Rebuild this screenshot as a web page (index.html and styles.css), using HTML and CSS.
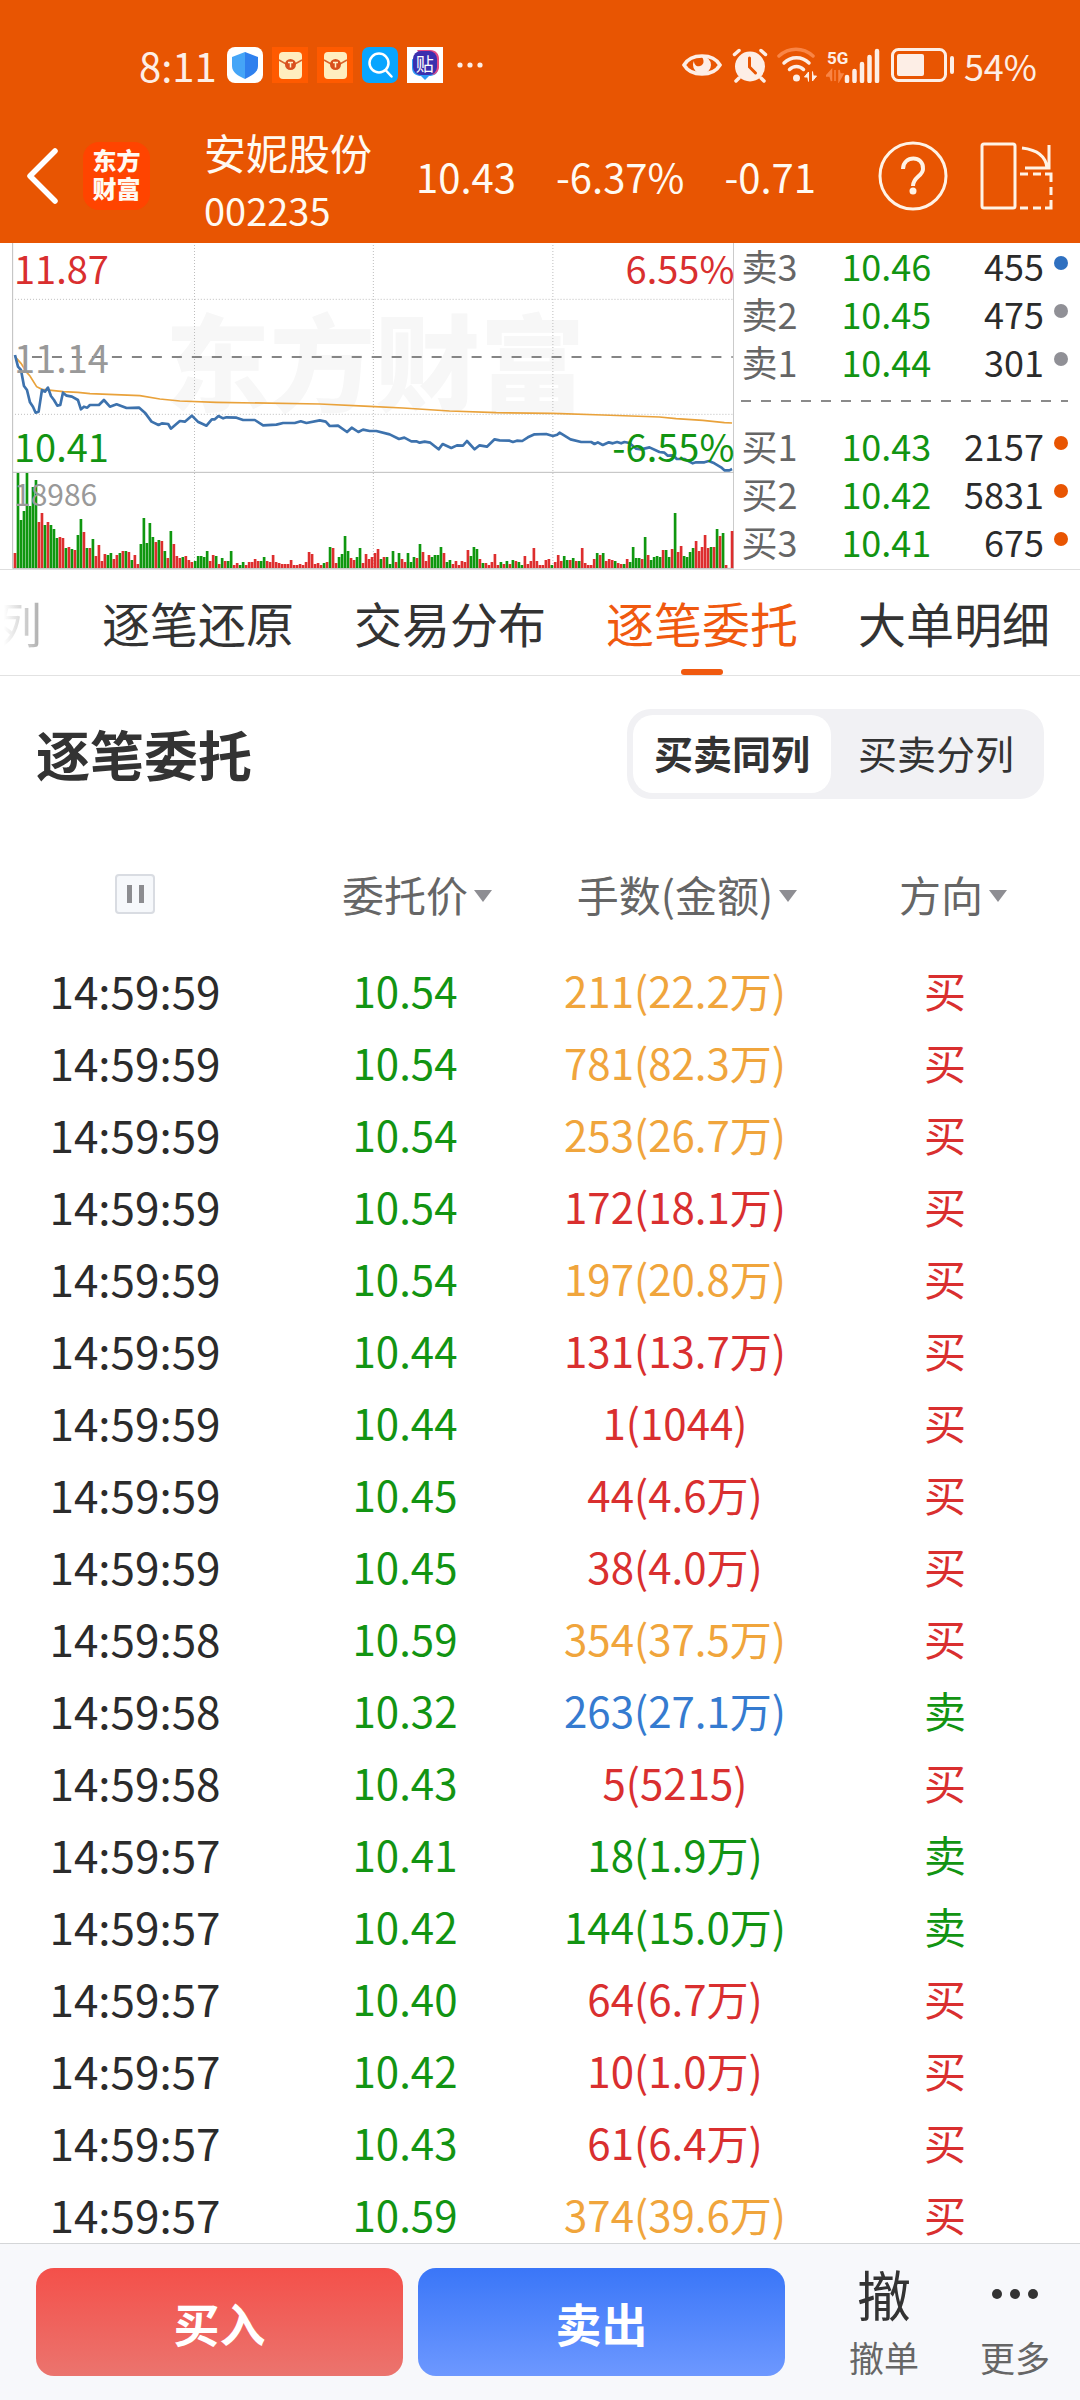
FILE: index.html
```html
<!DOCTYPE html>
<html lang="zh-CN">
<head>
<meta charset="utf-8">
<meta name="viewport" content="width=device-width, initial-scale=1">
<title>安妮股份 002235</title>
<link rel="stylesheet" href="styles.css">
</head>
<body>
<div class="app">
  <div class="status">
    <span class="status-text">8:11</span>
    <div class="status-apps">
      <svg width="36" height="36" viewBox="0 0 36 36"><rect width="36" height="36" rx="8" fill="#fff"/><path d="M18 5 31 10v9c0 6-6 10-13 13z" fill="#2f80ee"/><path d="M18 5 5 10v9c0 6 6 10 13 13z" fill="#45a5f7"/></svg>
      <svg width="36" height="36" viewBox="0 0 36 36"><rect width="36" height="36" fill="#ff5a00"/><rect x="7" y="5" width="23" height="27" rx="4" fill="#ffeebf"/><path d="M7 13 14 17h9l7-4" fill="none" stroke="#d9622a" stroke-width="1.5"/><circle cx="18.500" cy="17.500" r="5.500" fill="#d9501e"/><path d="M16 15.500h5M18.500 15.500v5" stroke="#fff0c8" stroke-width="1.500"/></svg>
      <svg width="36" height="36" viewBox="0 0 36 36"><rect width="36" height="36" fill="#ff5a00"/><rect x="7" y="5" width="23" height="27" rx="4" fill="#ffeebf"/><path d="M7 13 14 17h9l7-4" fill="none" stroke="#d9622a" stroke-width="1.5"/><circle cx="18.500" cy="17.500" r="5.500" fill="#d9501e"/><path d="M16 15.500h5M18.500 15.500v5" stroke="#fff0c8" stroke-width="1.500"/></svg>
      <svg width="36" height="36" viewBox="0 0 36 36"><rect width="36" height="36" rx="7" fill="#08a5ff"/><circle cx="17" cy="16" r="9.500" fill="none" stroke="#fff" stroke-width="2.500"/><path d="m23.500 23 6 6.500" stroke="#fff" stroke-width="2.500" stroke-linecap="round"/></svg>
      <span class="tieba"><svg width="36" height="36" viewBox="0 0 36 36"><rect width="36" height="36" fill="#fff"/><path d="M5 12v9c0 6 5 8 9 8l4 4 4-4c5 0 9-2 9-8z" fill="#2f9bf5"/><path d="M10 3h13c6 0 9 4 9 9v8c0 4-3 7-6 8z" fill="#e34a86"/><rect x="6" y="4" width="24" height="24" rx="8" fill="#3b2fae"/></svg><span class="tieba-char">贴</span></span>
      <svg class="more-dots" width="28" height="36" viewBox="0 0 28 36" fill="#fdeee6"><circle cx="4" cy="18" r="2.600"/><circle cx="14" cy="18" r="2.600"/><circle cx="24" cy="18" r="2.600"/></svg>
    </div>
    <div class="status-right">
      <svg width="42" height="36" viewBox="0 0 42 36"><path d="M3 18C10 6 32 6 39 18 32 30 10 30 3 18z" fill="none" stroke="#fdeee6" stroke-width="3.500"/><path d="M21 9a9 9 0 1 1-9 9c0-2 .5-3 1-4 0 4 3 6 6 5 4-1 5-6 1-10z" fill="#fdeee6"/></svg>
      <svg width="36" height="36" viewBox="0 0 36 36" fill="none" stroke="#fdeee6" stroke-width="3.500" stroke-linecap="round"><circle cx="18" cy="19.500" r="15" fill="#fdeee6" stroke="none"/><path d="M2.500 7.500 7 3.500M33.500 7.500 29 3.500M7 31l-3 3M29 31l3 3"/><path d="M17.500 11v9l6 6" stroke="#e85502" stroke-width="3"/></svg>
      <svg width="40" height="36" viewBox="0 0 40 36" fill="none" stroke="#fdeee6" stroke-width="3.500" stroke-linecap="round"><path d="M2 9c10-9 24-9 34 0" stroke="#f98546"/><path d="M7 16c7-7 18-7 25 0M12.500 22.500c4-4 10-4 14 0"/><circle cx="19.500" cy="31" r="3.500" fill="#fdeee6" stroke="none"/><path d="M31.500 34V25l-4 5h3zM35.500 25v9l4-5h-3z" fill="#fdeee6" stroke="#fdeee6" stroke-width="1"/></svg>
      <svg width="56" height="36" viewBox="0 0 56 36"><text x="1" y="17" class="net">5G</text><path d="M5.500 34V23L0 29h4zM9 23v11M13 23v11l4-7h-3z" fill="#f98546" stroke="#f98546" stroke-width="1.500"/><path d="M21 30v4M28.500 24v10M36 17v17M43.500 10v24M51 4v30" stroke="#fdeee6" stroke-width="4.500" stroke-linecap="round"/></svg>
      <svg width="64" height="36" viewBox="0 0 64 36"><rect x="1.500" y="2.500" width="53" height="31" rx="6" fill="none" stroke="#fdeee6" stroke-width="3"/><rect x="6" y="7" width="27" height="22" rx="2" fill="#fdeee6"/><path d="M61 11v14" stroke="#fdeee6" stroke-width="4" stroke-linecap="round"/></svg>
    </div>
    <span class="status-text battery">54%</span>
  </div>

  <header class="head">
    <button class="icon-btn" aria-label="返回"><svg width="32" height="56" viewBox="0 0 32 56"><path d="M29 3 4 28l25 25" fill="none" stroke="#fff" stroke-width="5.500" stroke-linecap="round" stroke-linejoin="round"/></svg></button>
    <span class="logo">东方<br>财富</span>
    <div class="stock"><h1 class="stock-name">安妮股份</h1><span class="stock-code">002235</span></div>
    <div class="quote"><span>10.43</span><span>-6.37%</span><span>-0.71</span></div>
    <div class="head-tools">
      <button class="icon-btn" aria-label="帮助"><svg width="70" height="70" viewBox="0 0 70 70" fill="none" stroke="#fff3e6" stroke-width="3"><circle cx="35" cy="35" r="33"/><path d="M25 28c0-14 21-14 20 0 0 7-10 8-10 17" stroke-width="4"/><circle cx="35" cy="50" r="3.500" fill="#fff3e6" stroke="none"/></svg></button>
      <button class="icon-btn" aria-label="横屏"><svg width="74" height="70" viewBox="0 0 74 70" fill="none" stroke="#fff3e6" stroke-width="3"><rect x="2" y="3" width="33" height="64" rx="2"/><path d="M42 7c17 2 24 9 25 20M45 27h24V4"/><path d="M40 33h8M53 33h8M65 33h6v8M71 46v8M71 59v8h-6M61 67h-8M48 67h-8"/></svg></button>
    </div>
  </header>

  <section class="market">
    <div class="chart">
      <span class="watermark">东方财富</span>
      <svg class="chart-svg" viewBox="0 9 2205 978" preserveAspectRatio="none">
        <g fill="none" stroke="#bdbdbd" stroke-width="3">
          <path d="M38 9V985M2203 9V985M38 697H2203M38 985H2203"/>
          <path stroke-dasharray="3 6" d="M45 178H2200M45 523H2200M584 15V985M1121 15V985M1660 15V985"/>
        </g>
        <path d="M96 351H2200" stroke="#858585" stroke-width="6" stroke-dasharray="30 30"/>
        <g id="volume"></g>
        <polyline fill="none" stroke="#e9a23b" stroke-width="5" points="45,350 63,370 81,398 90,408 110,440 126,448 190,455 234,457 270,461 420,467 480,477 540,483 650,487 960,492 1110,499 1210,504 1350,513 1490,518 1660,520 1810,525 1980,531 2030,536 2110,541 2175,548 2198,549"/>
        <polyline fill="none" stroke="#3d72ad" stroke-width="8" stroke-linejoin="round" points="45,345 54,380 63,390 72,438 81,450 90,487 99,500 107,518 116,515 126,450 135,455 144,443 153,468 162,480 172,497 181,495 189,458 200,467 216,470 234,480 243,508 252,500 262,503 270,495 297,495 312,480 330,500 350,493 380,504 418,503 435,518 455,545 476,555 486,550 505,552 513,566 540,543 555,545 576,527 594,545 620,557 636,538 645,538 656,528 670,535 680,532 710,533 730,540 765,540 790,556 830,554 850,549 885,549 903,544 920,549 960,541 978,545 990,558 1015,557 1042,576 1056,563 1076,576 1090,569 1110,573 1130,573 1170,583 1198,597 1214,593 1235,604 1250,604 1260,608 1275,605 1292,608 1317,628 1329,612 1355,624 1372,616 1390,617 1402,603 1425,628 1440,616 1462,620 1485,598 1500,601 1530,602 1540,606 1552,602 1568,603 1585,592 1605,583 1640,582 1660,588 1673,584 1680,578 1690,584 1713,598 1745,606 1775,606 1785,612 1795,607 1810,615 1828,607 1840,610 1853,606 1865,610 1875,606 1890,609 1910,626 1925,628 1950,622 1980,636 1995,638 2005,647 2022,646 2032,657 2055,657 2080,670 2090,667 2115,667 2128,663 2145,670 2165,682 2175,691 2190,691 2198,687"/>
      </svg>
      <span class="tick tick-high up">11.87</span>
      <span class="tick tick-high tick-end up">6.55%</span>
      <span class="tick tick-mid">11.14</span>
      <span class="tick tick-low down">10.41</span>
      <span class="tick tick-low tick-end down">-6.55%</span>
      <span class="tick tick-vol">18986</span>
    </div>
    <div class="book">
      <div class="level"><span class="side">卖3</span><span class="down">10.46</span><span class="qty">455</span><i class="dot dot-blue"></i></div>
      <div class="level"><span class="side">卖2</span><span class="down">10.45</span><span class="qty">475</span><i class="dot"></i></div>
      <div class="level"><span class="side">卖1</span><span class="down">10.44</span><span class="qty">301</span><i class="dot"></i></div>
      <div class="book-line"></div>
      <div class="level"><span class="side">买1</span><span class="down">10.43</span><span class="qty">2157</span><i class="dot dot-orange"></i></div>
      <div class="level"><span class="side">买2</span><span class="down">10.42</span><span class="qty">5831</span><i class="dot dot-orange"></i></div>
      <div class="level"><span class="side">买3</span><span class="down">10.41</span><span class="qty">675</span><i class="dot dot-orange"></i></div>
    </div>
  </section>

  <nav class="tabs">
    <a href="#" class="tab tab-faded">列</a>
    <a href="#" class="tab">逐笔还原</a>
    <a href="#" class="tab">交易分布</a>
    <a href="#" class="tab tab-active" aria-current="page">逐笔委托</a>
    <a href="#" class="tab">大单明细</a>
  </nav>

  <main class="orders">
    <div class="orders-head">
      <h2 class="title">逐笔委托</h2>
      <div class="segment"><button class="seg seg-on">买卖同列</button><button class="seg">买卖分列</button></div>
    </div>
    <table class="list">
      <thead>
        <tr>
          <th><button class="pause" aria-label="暂停"><i></i><i></i></button></th>
          <th><button class="sort">委托价</button></th>
          <th><button class="sort">手数(金额)</button></th>
          <th class="col-side"><button class="sort">方向</button></th>
        </tr>
      </thead>
      <tbody>
        <tr><td class="time">14:59:59</td><td class="down">10.54</td><td class="big">211(22.2万)</td><td class="up">买</td></tr>
        <tr><td class="time">14:59:59</td><td class="down">10.54</td><td class="big">781(82.3万)</td><td class="up">买</td></tr>
        <tr><td class="time">14:59:59</td><td class="down">10.54</td><td class="big">253(26.7万)</td><td class="up">买</td></tr>
        <tr><td class="time">14:59:59</td><td class="down">10.54</td><td class="up">172(18.1万)</td><td class="up">买</td></tr>
        <tr><td class="time">14:59:59</td><td class="down">10.54</td><td class="big">197(20.8万)</td><td class="up">买</td></tr>
        <tr><td class="time">14:59:59</td><td class="down">10.44</td><td class="up">131(13.7万)</td><td class="up">买</td></tr>
        <tr><td class="time">14:59:59</td><td class="down">10.44</td><td class="up">1(1044)</td><td class="up">买</td></tr>
        <tr><td class="time">14:59:59</td><td class="down">10.45</td><td class="up">44(4.6万)</td><td class="up">买</td></tr>
        <tr><td class="time">14:59:59</td><td class="down">10.45</td><td class="up">38(4.0万)</td><td class="up">买</td></tr>
        <tr><td class="time">14:59:58</td><td class="down">10.59</td><td class="big">354(37.5万)</td><td class="up">买</td></tr>
        <tr><td class="time">14:59:58</td><td class="down">10.32</td><td class="big-sell">263(27.1万)</td><td class="down">卖</td></tr>
        <tr><td class="time">14:59:58</td><td class="down">10.43</td><td class="up">5(5215)</td><td class="up">买</td></tr>
        <tr><td class="time">14:59:57</td><td class="down">10.41</td><td class="down">18(1.9万)</td><td class="down">卖</td></tr>
        <tr><td class="time">14:59:57</td><td class="down">10.42</td><td class="down">144(15.0万)</td><td class="down">卖</td></tr>
        <tr><td class="time">14:59:57</td><td class="down">10.40</td><td class="up">64(6.7万)</td><td class="up">买</td></tr>
        <tr><td class="time">14:59:57</td><td class="down">10.42</td><td class="up">10(1.0万)</td><td class="up">买</td></tr>
        <tr><td class="time">14:59:57</td><td class="down">10.43</td><td class="up">61(6.4万)</td><td class="up">买</td></tr>
        <tr><td class="time">14:59:57</td><td class="down">10.59</td><td class="big">374(39.6万)</td><td class="up">买</td></tr>
      </tbody>
    </table>
  </main>

  <footer class="trade">
    <button class="trade-btn buy">买入</button>
    <button class="trade-btn sell">卖出</button>
    <div class="trade-more">
      <button class="action"><span class="action-icon">撤</span><span>撤单</span></button>
      <button class="action"><span class="action-icon"><svg width="48" height="12" viewBox="0 0 48 12" fill="#333"><circle cx="6" cy="6" r="5"/><circle cx="24" cy="6" r="5"/><circle cx="42" cy="6" r="5"/></svg></span><span>更多</span></button>
    </div>
  </footer>
</div>
<script src="chart.js"></script>
</body>
</html>
```

FILE: styles.css
```css
* { box-sizing: border-box; }
body {
  margin: 0;
  background: #fff;
  color: #2b2b2b;
  font-family: "Noto Sans CJK SC", sans-serif;
}
button { border: 0; padding: 0; margin: 0; background: none; color: inherit; font: inherit; }
h1, h2 { margin: 0; font-weight: 400; }
svg { display: block; }
.app { display: flex; flex-direction: column; height: 100vh; overflow: hidden; }
.up { color: #d92f2f; }
.down { color: #129412; }
.big { color: #f0a53c; }
.big-sell { color: #357bd0; }

/* status bar */
.status {
  display: flex;
  flex: none;
  align-items: center;
  height: 108px;
  padding: 22px 43px 0 139px;
  background: #e85502;
  color: #fdeee6;
}
.status-text { font-size: 40px; line-height: 48px; }
.status-apps { display: flex; gap: 9px; margin-left: 10px; }
.tieba { position: relative; }
.tieba-char { position: absolute; inset: 0; color: #fff; font-size: 18px; line-height: 32px; text-align: center; }
.more-dots { margin-left: 4px; }
.status-right { display: flex; gap: 9px; margin-left: auto; }
.net { font: 700 17px Roboto, sans-serif; fill: #fdeee6; }
.battery { margin-left: 9px; font-size: 36px; }

/* stock header */
.head {
  display: flex;
  flex: none;
  align-items: center;
  height: 135px;
  padding: 0 26px;
  background: #e85502;
  color: #fffaf2;
}
.logo {
  width: 67px;
  margin-left: 25px;
  padding: 4px 0 8px;
  border-radius: 16px;
  background: #ff4400;
  font-size: 24px;
  font-weight: 900;
  line-height: 28px;
  text-align: center;
}
.stock { align-self: flex-end; margin-left: 54px; padding-bottom: 4px; }
.stock-name { font-size: 42px; line-height: 58px; }
.stock-code { display: block; font-size: 38px; line-height: 58px; }
.quote { display: flex; gap: 40px; margin-left: 44px; font-size: 40px; line-height: 48px; }
.head-tools { display: flex; gap: 32px; margin-left: auto; }

/* chart and order book */
.market { display: flex; flex: none; height: 327px; border-bottom: 1px solid #dedede; }
.chart { position: relative; flex: none; width: 68%; }
.chart-svg { position: relative; width: 100%; height: 326px; }
.watermark {
  position: absolute;
  top: 54px;
  left: 165px;
  color: #f7f7f7;
  font-size: 105px;
  font-weight: 900;
  line-height: 120px;
}
.tick { position: absolute; left: 14px; font-size: 38px; line-height: 40px; }
.tick-high { top: 5px; }
.tick-mid { top: 94px; color: #999; }
.tick-low { top: 183px; }
.tick-end { left: auto; right: 0; }
.tick-vol { top: 230px; color: #999; font-size: 30px; }
.book { flex: 1; padding: 0 12px 0 7px; }
.level {
  display: grid;
  grid-template-columns: 100px 1fr 1fr 24px;
  align-items: center;
  height: 48px;
  font-size: 36px;
  line-height: 44px;
  padding-bottom: 4px;
}
.side { color: #666; }
.qty { text-align: right; }
.dot { justify-self: end; width: 14px; height: 14px; margin-bottom: 4px; border-radius: 50%; background: #909096; }
.dot-blue { background: #2f70c0; }
.dot-orange { background: #e85502; }
.book-line {
  height: 2px;
  margin: 13px 0 21px;
  background: repeating-linear-gradient(90deg, #8a8a8a 0 10px, transparent 10px 20px);
}

/* tabs */
.tabs {
  display: flex;
  flex: none;
  gap: 60px;
  height: 106px;
  padding-right: 30px;
  justify-content: flex-end;
  overflow: hidden;
  border-bottom: 1px solid #e2e2e2;
}
.tab {
  position: relative;
  flex: none;
  color: #333;
  font-size: 48px;
  line-height: 104px;
  text-decoration: none;
}
.tab-faded {
  background: linear-gradient(90deg, #fff 20%, #aaa);
  background-clip: text;
  color: transparent;
}
.tab-active { color: #f0590f; }
.tab-active::after {
  content: "";
  position: absolute;
  left: 50%;
  bottom: 0;
  width: 42px;
  height: 6px;
  margin-left: -21px;
  border-radius: 3px;
  background: #f0590f;
}

/* order list */
.orders { flex: 1; min-height: 0; overflow: hidden; }
.orders-head {
  display: flex;
  align-items: center;
  justify-content: space-between;
  height: 156px;
  padding: 0 36px;
}
.title { color: #333; font-size: 54px; font-weight: 700; line-height: 72px; }
.segment { display: flex; padding: 6px; border-radius: 24px; background: #f1f1f4; }
.seg { height: 78px; padding: 0 24px 4px 27px; border-radius: 20px; color: #333; font-size: 39px; }
.seg-on { padding: 0 21px 4px; background: #fff; font-weight: 700; }
.list { width: 100%; border-collapse: collapse; table-layout: fixed; font-size: 42px; line-height: 48px; }
.list th { height: 124px; padding: 0; color: #666; font-weight: 400; }
.list td { height: 72px; padding: 0 0 4px; text-align: center; }
.list .time { font-size: 44px; }
.list .col-side { padding-right: 8px; }
.pause {
  display: flex;
  align-items: center;
  justify-content: center;
  gap: 7px;
  width: 40px;
  height: 40px;
  margin: 0 auto;
  border: 2px solid #d9dce2;
  border-radius: 4px;
  background: #f6f8fb;
}
.pause i { width: 5px; height: 18px; background: #8c8c90; }
.sort { position: relative; }
.sort::after {
  content: "";
  position: absolute;
  left: 100%;
  top: 20px;
  margin-left: 6px;
  border: 9px solid transparent;
  border-top: 12px solid #8e8e93;
  border-bottom: 0;
}

/* trade bar */
.trade {
  display: grid;
  flex: none;
  grid-template-columns: 367fr 367fr 256fr;
  gap: 15px;
  padding: 24px 24px 24px 36px;
  border-top: 1px solid #d4d6d8;
  background: #f7f8fb;
}
.trade-btn { height: 108px; border-radius: 18px; color: #fff; font-size: 46px; font-weight: 700; }
.buy { background: linear-gradient(#f4504a, #eb746e); }
.sell { background: linear-gradient(#3a76f8, #6d98ff); }
.trade-more { display: flex; justify-content: space-between; padding: 0 6px 0 49px; }
.action { display: flex; flex-direction: column; align-items: center; color: #666; font-size: 35px; line-height: 34px; }
.action-icon { display: flex; align-items: center; height: 52px; margin-bottom: 20px; color: #333; font-size: 54px; line-height: 52px; }
```

FILE: chart.js
```js
// One entry per minute: R = up, G = down, followed by the bar height.
const volumes = `R15 G95 G48 G57 G95 G62 G81 G88 R46 R55 G43 R46 G43 G39 G30 R31 R30 G20 R21 G19 R18 G33 G49 R36
G20 R20 G29 R12 R23 R7 R14 G13 G15 R9 R13 G15 R17 G17 R16 G8 R13 R4 G24 G50 G25 G45 G31 R26 G28 R27 G17 R10 G37
R24 R12 R10 G11 R12 R8 R6 G7 G12 G12 G11 G17 R7 R13 G12 R4 G10 R7 G7 G17 R3 R5 G3 G6 R3 R6 R6 R9 R7 G7 G11 R7 R6
R13 R6 R5 R4 R4 R4 R8 R3 R3 R4 R3 R6 R16 R14 R4 R5 R3 G5 R6 G21 R20 R5 G11 G14 G32 G17 R10 R8 G11 G20 R5 R14 R9
R11 R15 R19 G9 R11 G11 G4 G17 R6 G15 R9 R6 G15 G6 G11 R10 G24 R16 R7 R13 G11 G13 G13 G21 R15 G6 G8 R4 R7 R3 R7 R6
R18 G12 G21 G19 R9 G5 R5 R3 R6 R14 R3 G6 R4 G7 R4 G8 R7 G6 G3 R12 R4 R7 R20 R7 R3 R3 R8 R9 G3 R6 R13 R7 G12 G8 R8
G10 R7 G7 R20 R5 R3 R3 R9 G15 R13 G15 R7 R9 R8 G7 R5 R4 G4 R9 G6 G21 G10 G10 R9 G31 R13 G8 G11 G12 G11 R18 G18
G11 R19 G55 R16 R22 G12 G11 G16 G20 R27 R17 R21 R33 R20 G21 R21 G39 R32 G35 R3 R0 R37`.split(/\s+/);

const group = document.getElementById("volume");
const step = (2198 - 45) / (volumes.length - 1);
volumes.forEach((entry, i) => {
  const h = Number(entry.slice(1)) * 3;
  const bar = document.createElementNS("http://www.w3.org/2000/svg", "rect");
  bar.setAttribute("x", 41 + Math.round(i * step));
  bar.setAttribute("y", 984 - h);
  bar.setAttribute("width", 8);
  bar.setAttribute("height", h);
  bar.setAttribute("fill", entry[0] === "R" ? "#dd2e2e" : "#0f970f");
  group.appendChild(bar);
});
```
